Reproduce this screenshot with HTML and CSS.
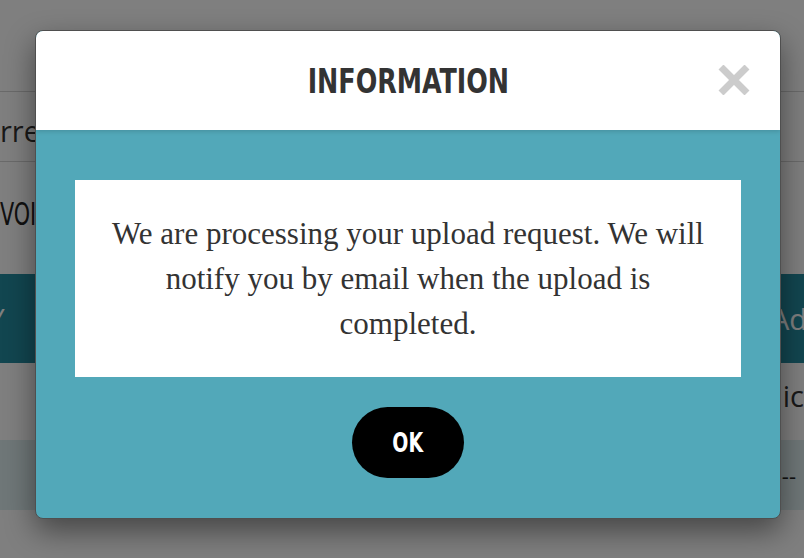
FILE: index.html
```html
<!DOCTYPE html>
<html lang="en">
<head>
<meta charset="utf-8">
<title>Information</title>
<link rel="stylesheet" href="styles.css">
</head>
<body>
<div class="page">
  <div class="page-top"></div>
  <div class="page-row row-current"><span class="txt-dark">rre</span></div>
  <div class="page-row row-vol"><span class="txt-thin">VOI</span></div>
  <div class="page-band band-dark"><span class="slash">/</span><span class="band-add">Ad</span></div>
  <div class="page-row row-ic"><span class="txt-dark">ic</span></div>
  <div class="page-band band-grey"><span class="dashes">--</span></div>
</div>
<div class="overlay">
  <div class="modal" role="dialog" aria-labelledby="modal-title">
    <div class="modal-header">
      <h2 id="modal-title" class="modal-title">INFORMATION</h2>
      <button class="modal-close" aria-label="Close">
        <svg width="32" height="30" viewBox="0 0 32 30"><path d="M3 2 L29 28 M29 2 L3 28" stroke="#cccccc" stroke-width="7" fill="none"/></svg>
      </button>
    </div>
    <div class="modal-body">
      <p class="modal-message">We are processing your upload request. We will notify you by email when the upload is completed.</p>
      <button class="modal-ok"><span class="ok-label">OK</span></button>
    </div>
  </div>
</div>
</body>
</html>
```
FILE: styles.css
```css
html, body {
  margin: 0;
  padding: 0;
}
body {
  width: 804px;
  height: 558px;
  overflow: hidden;
  position: relative;
  background: #ffffff;
  font-family: "Open Sans", "Liberation Sans", sans-serif;
}
.page {
  display: flex;
  flex-direction: column;
}
.page-top {
  height: 91px;
  border-bottom: 1px solid #d4d4d4;
}
.page-row {
  display: flex;
  align-items: center;
}
.row-current {
  height: 69px;
  border-bottom: 1px solid #d4d4d4;
}
.row-vol {
  height: 112px;
}
.txt-dark {
  font-size: 29px;
  color: #333333;
}
.row-current .txt-dark {
  margin-top: 8px;
}
.txt-thin {
  display: inline-block;
  font-family: "DejaVu Sans Condensed", "DejaVu Sans", sans-serif;
  font-size: 32px;
  font-weight: 200;
  color: #222222;
  margin-top: -8px;
  transform: scaleX(0.72);
  transform-origin: left center;
}
.page-band {
  display: flex;
  align-items: center;
  justify-content: space-between;
}
.band-dark {
  height: 89px;
  background: #248ca0;
  color: #ffffff;
  font-size: 29px;
}
.slash {
  font-style: italic;
  margin-left: -8px;
}
.band-add {
  margin-right: -3px;
}
.row-ic {
  height: 77px;
  justify-content: flex-end;
  padding-bottom: 12px;
  box-sizing: border-box;
}
.band-grey {
  height: 70px;
  background: #deeef0;
  justify-content: flex-end;
}
.dashes {
  color: #222;
  font-size: 22px;
  margin-right: 8px;
}
.overlay {
  position: absolute;
  inset: 0;
  background: rgba(0, 0, 0, 0.5);
  display: flex;
  align-items: flex-start;
  padding: 30px 23px 0 35px;
}
.modal {
  width: 746px;
  height: 489px;
  box-sizing: border-box;
  border: 1px solid #4f4f4f;
  border-radius: 8px;
  background: #52a8b9;
  overflow: hidden;
  box-shadow: 0 12px 30px rgba(0, 0, 0, 0.45);
  display: flex;
  flex-direction: column;
}
.modal-header {
  height: 99px;
  flex: none;
  background: #ffffff;
  position: relative;
  display: flex;
  align-items: center;
  justify-content: center;
  box-shadow: 0 2px 4px rgba(0, 0, 0, 0.12);
  z-index: 1;
}
.modal-title {
  margin: 0;
  font-family: "DejaVu Sans Condensed", "DejaVu Sans", sans-serif;
  font-weight: bold;
  font-size: 34px;
  color: #333333;
  transform: scaleX(0.83);
}
.modal-close {
  position: absolute;
  right: 30px;
  top: 34px;
  padding: 0;
  border: 0;
  background: none;
  display: flex;
}
.modal-body {
  flex: 1;
  display: flex;
  flex-direction: column;
  align-items: center;
  padding: 50px 39px 0 39px;
}
.modal-message {
  margin: 0;
  align-self: stretch;
  background: #ffffff;
  padding: 31px 30px;
  font-family: "Liberation Serif", serif;
  font-size: 31px;
  line-height: 45px;
  color: #333333;
  text-align: center;
}
.modal-ok {
  margin-top: 30px;
  width: 112px;
  height: 71px;
  border: 0;
  border-radius: 36px;
  background: #000000;
  color: #ffffff;
  padding: 0;
  display: flex;
  align-items: center;
  justify-content: center;
}
.ok-label {
  display: inline-block;
  font-family: "DejaVu Sans Condensed", "DejaVu Sans", sans-serif;
  font-weight: bold;
  font-size: 27px;
  transform: scaleX(0.78);
}
```
